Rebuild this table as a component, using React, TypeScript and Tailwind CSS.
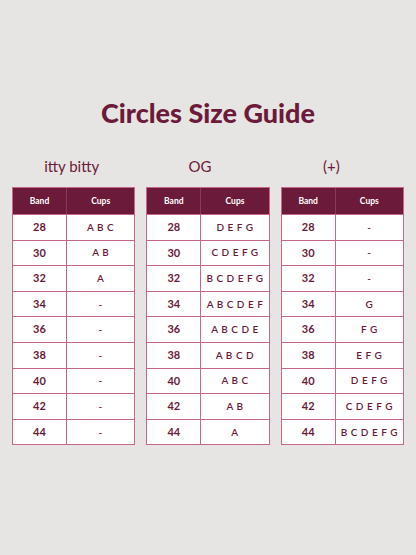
import React from "react";

const bands = ["28", "30", "32", "34", "36", "38", "40", "42", "44"];

const guides = [
  {
    label: "itty bitty",
    pad: "pr-[4px]",
    cups: ["A B C", "A B", "A", "-", "-", "-", "-", "-", "-"],
  },
  {
    label: "OG",
    pad: "pr-[16px]",
    cups: ["D E F G", "C D E F G", "B C D E F G", "A B C D E F", "A B C D E", "A B C D", "A B C", "A B", "A"],
  },
  {
    label: "(+)",
    pad: "pr-[22px]",
    cups: ["-", "-", "-", "G", "F G", "E F G", "D E F G", "C D E F G", "B C D E F G"],
  },
];

const App = () => {
  return (
    <div
      className="w-[416px] h-[555px] bg-[#e6e5e3] text-[#6b1a39] flex flex-col"
      style={{ fontFamily: "Lato, 'Open Sans', sans-serif" }}
    >
      {/* Title */}
      <h1 className="mt-[95px] text-center text-[27px] leading-[36px] font-black">
        Circles Size Guide
      </h1>

      {/* Tables */}
      <div className="mt-[25px] flex gap-[11px] px-3">
        {guides.map((g) => (
          <div key={g.label} className="flex-1 flex flex-col">
            <div className={`text-center text-[15px] leading-[20px] mb-[11px] ${g.pad}`}>{g.label}</div>
            <div className="border-[1.5px] border-[#c66688] bg-white">
              <div className="flex h-[26px] bg-[#6b1a39] text-white text-[8.5px] font-bold">
                <div className="w-[54px] flex items-center justify-center border-r-[1.5px] border-[#8a3a58]">Band</div>
                <div className="flex-1 flex items-center justify-center">Cups</div>
              </div>
              {bands.map((b, i) => (
                <div key={b} className="flex h-[25.6px] border-t-[1.5px] border-[#c66688] text-[11px] font-bold">
                  <div className="w-[54px] flex items-center justify-center border-r-[1.5px] border-[#c66688]">{b}</div>
                  <div className="flex-1 flex items-center justify-center whitespace-nowrap text-[10px] tracking-[0.5px] font-semibold">
                    {g.cups[i]}
                  </div>
                </div>
              ))}
            </div>
          </div>
        ))}
      </div>
    </div>
  );
};

export default App;
